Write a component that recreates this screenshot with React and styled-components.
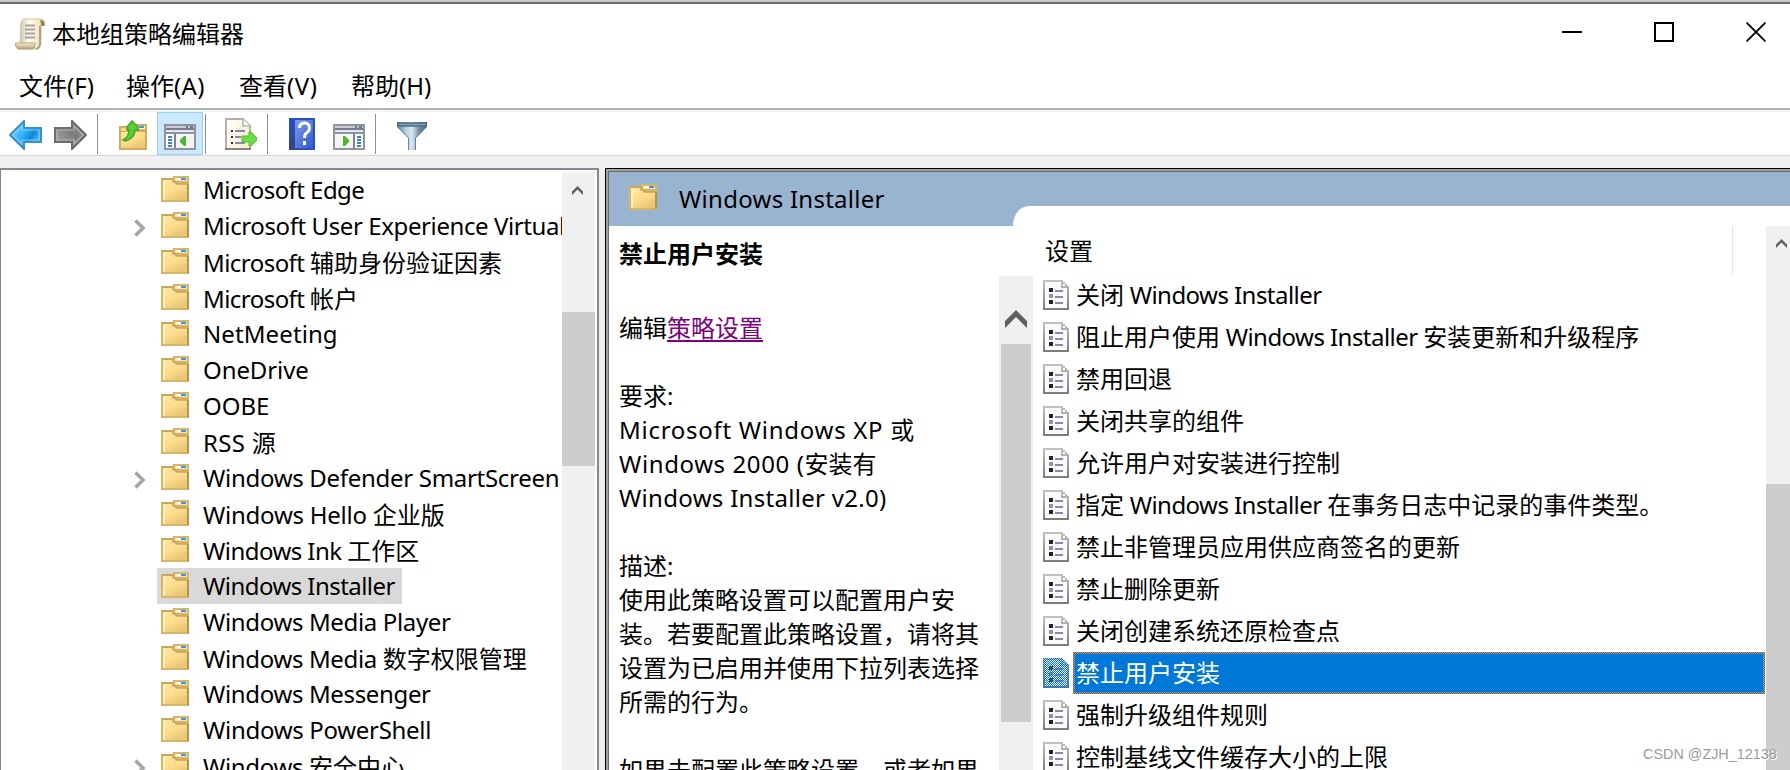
import React from 'react';
import styled, { createGlobalStyle, css } from 'styled-components';

const GlobalStyle = createGlobalStyle`
  * {
    box-sizing: border-box;
  }
  body {
    margin: 0;
    overflow: hidden;
    background: #f0f0f0;
    color: #000;
    font: 24px 'Noto Sans', 'Noto Sans CJK SC', sans-serif;
  }
  svg {
    display: block;
    flex: none;
  }
`;

// Window frame
const Window = styled.div`
  display: flex;
  flex-direction: column;
  width: 1790px;
  height: 770px;
  overflow: hidden;
  border-top: 2px solid #c8c8c8;
`;

// Title bar
const TitleBar = styled.header`
  display: flex;
  align-items: center;
  height: 62px;
  padding: 0 24px 0 14px;
  border-top: 2px solid #6b6b6b;
  background: #fff;
`;

const Title = styled.div`
  flex: 1;
  margin-left: 6px;
  line-height: 36px;
`;

const WindowButtons = styled.div`
  display: flex;
  gap: 72px;
  margin-top: -4px;
`;

// Menu row
const MenuBar = styled.nav`
  display: flex;
  gap: 33px;
  height: 44px;
  padding-left: 19px;
  background: #fff;
  line-height: 44px;
`;

const MenuItem = styled.div`
  width: ${(p) => p.$width}px;
  white-space: nowrap;
`;

// Toolbar
const ToolBar = styled.div`
  display: flex;
  height: 48px;
  border-top: 2px solid #b2b2b2;
  border-bottom: 1px solid #d9d9d9;
  background: #fff;
  box-shadow: inset 0 2px #f1f8fa;
`;

const ToolButton = styled.div`
  display: flex;
  align-items: flex-end;
  justify-content: center;
  width: ${(p) => p.$width || 46}px;
  height: 43px;
  margin: 2px 0 0 ${(p) => p.$left || 0}px;
  padding-bottom: 4px;
  border: 1px solid ${(p) => (p.$active ? '#99d1ff' : 'transparent')};
  background: ${(p) => (p.$active ? '#cce8ff' : 'transparent')};
`;

const Separator = styled.div`
  width: 1px;
  height: 40px;
  margin: 4px 0 0 ${(p) => p.$left}px;
  background: #8d8d8d;
`;

// Body with both panes
const Body = styled.main`
  display: flex;
  flex: 1;
  gap: 6px;
  min-height: 0;
  padding-top: 12px;
`;

const TreePane = styled.section`
  display: flex;
  justify-content: space-between;
  width: 599px;
  padding: 2px 2px 0 0;
  border: solid #828790;
  border-width: 2px 2px 0 1px;
  background: #fff;
`;

const TreeList = styled.div`
  width: 561px;
  overflow: hidden;
`;

const TreeRow = styled.div`
  display: flex;
  align-items: center;
  height: 36px;
  padding-left: 133px;
`;

const Expander = styled.div`
  flex: none;
  width: 23px;
  padding-top: 3px;
`;

const TreeLabel = styled.div`
  display: flex;
  flex: none;
  align-items: center;
  height: 36px;
  padding: 0 7px 2px 4px;
  background: ${(p) => (p.$selected ? '#d9d9d9' : 'transparent')};
  white-space: nowrap;

  svg {
    margin-right: 14px;
  }
`;

// Scrollbars
const ScrollTrack = styled.div`
  display: flex;
  flex: none;
  flex-direction: column;
  align-items: center;
  width: ${(p) => p.$width}px;
  background: #f0f0f0;
`;

const ScrollArrow = styled.div`
  display: flex;
  align-items: center;
  justify-content: center;
  height: ${(p) => p.$height}px;
  padding: ${(p) => p.$padding || 0};
`;

const ScrollThumb = styled.div`
  flex: none;
  width: ${(p) => p.$width}px;
  height: ${(p) => p.$height}px;
  margin-top: ${(p) => p.$top || 0}px;
  background: #cdcdcd;
`;

// Details pane
const DetailPane = styled.section`
  display: flex;
  flex: 1;
  flex-direction: column;
  border: solid #000;
  border-width: 1px 0 0 1px;
`;

const DetailInner = styled.div`
  display: flex;
  flex: 1;
  min-height: 0;
  border: solid #a0a0a0;
  border-width: 2px 0 0 2px;
`;

const DetailFrame = styled.div`
  display: grid;
  flex: 1;
  grid-template-columns: 424px 1fr;
  min-height: 0;
  border: solid #696969;
  border-width: 1px 0 0 1px;
  background: #fff;
`;

const Banner = styled.div`
  display: flex;
  grid-column: 1 / 3;
  height: 54px;
  background: #99b4d1;
`;

const BannerTitle = styled.div`
  display: flex;
  align-items: center;
  width: 404px;
  padding: 0 0 2px 20px;

  svg {
    margin: -2px 22px 0 0;
  }
`;

const BannerTab = styled.div`
  flex: 1;
  margin-top: 34px;
  border-top-left-radius: 16px 20px;
  background: #fff;
`;

const Description = styled.div`
  display: flex;
  justify-content: space-between;
  height: 544px;
  padding-left: 10px;
  overflow: hidden;
`;

const DescriptionText = styled.div`
  width: 378px;
  padding-top: 11px;
  line-height: 34px;
  white-space: nowrap;
`;

const PolicyName = styled.h2`
  height: 34px;
  margin: 0 0 40px;
  font-size: 24px;
  line-height: 34px;
`;

const Line = styled.p`
  height: 34px;
  margin: 0;
`;

const Edit = styled(Line)`
  margin-bottom: 34px;
`;

const EditLink = styled.a`
  color: #800080;
  text-decoration: underline 2px;
  text-underline-offset: 3px;
`;

const DescriptionScroll = styled(ScrollTrack)`
  margin-top: 50px;
`;

const Settings = styled.div`
  display: flex;
  height: 544px;
  overflow: hidden;
`;

const SettingsTable = styled.div`
  flex: 1;
  padding-right: 1px;
`;

const ColumnHeader = styled.div`
  width: 700px;
  height: 48px;
  padding-left: 12px;
  border-right: 1px solid #e5e5e5;
  line-height: 50px;
`;

const SettingRow = styled.div`
  display: flex;
  align-items: center;
  height: 42px;
  padding-left: 10px;
`;

const SettingLabel = styled.div`
  flex: 1;
  height: 42px;
  margin-left: 4px;
  padding-left: 1px;
  border: 2px solid transparent;
  line-height: 38px;
  white-space: nowrap;
  ${(p) =>
    p.$selected &&
    css`
      background:
        linear-gradient(#0078d7, #0078d7) padding-box,
        repeating-conic-gradient(#ff8728 0 25%, #0078d7 0 50%) 0 0 / 2px 2px border-box;
      color: #fff;
    `}
`;

const Latin = styled.span`
  letter-spacing: ${(p) => p.$spacing}px;
`;

const Watermark = styled.div`
  position: absolute;
  top: 744px;
  left: 1643px;
  color: #9b9b9b;
  font: 14.4px/20px 'Liberation Sans', sans-serif;
  text-shadow: 1px 1px #fff;
`;

// Latin runs are tracked separately, the Chinese glyphs stay on a 24px grid
const Mixed = ({ text, spacing = -0.55 }) =>
  text.split(/([ -~]+)/).map((part, i) =>
    i % 2 ? (
      <Latin key={i} $spacing={spacing}>
        {part}
      </Latin>
    ) : (
      part
    )
  );

// Icons
const FolderIcon = () => (
  <svg width="28" height="26" viewBox="0 0 28 26">
    <defs>
      <linearGradient id="folder" x1="0" y1="0" x2="0.6" y2="1">
        <stop offset="0" stopColor="#ffe9a2" />
        <stop offset="0.6" stopColor="#fbdb8b" />
        <stop offset="1" stopColor="#e9c676" />
      </linearGradient>
      <linearGradient id="folderEdge">
        <stop offset="0" stopColor="#cfa95a" />
        <stop offset="1" stopColor="#8f7539" />
      </linearGradient>
    </defs>
    <path d="M0 2h12V0h16v26H0z" fill="#d8b566" />
    <path d="M2 4h10l3 4h11v16H2z" fill="url(#folder)" />
    <path d="M1 3h11v3h3v2h12" fill="none" stroke="#c6a35a" strokeWidth="1.500" />
    <path d="M3 24V7h2" fill="none" stroke="#fff3bd" strokeWidth="1.500" />
    <path d="M14 2h12v3H14z" fill="#f6e3b4" />
    <path d="M16 2h5v2h-5z" fill="#fff" />
    <path d="M20 2h5v2h-5z" fill="#3f97e3" />
    <path d="M0 25h28" stroke="url(#folderEdge)" strokeWidth="2" />
    <path d="M27 8v17" stroke="#b5934b" strokeWidth="2" />
  </svg>
);

const ScrollIcon = () => (
  <svg width="32" height="32" viewBox="0 0 32 32">
    <defs>
      <linearGradient id="scroll">
        <stop offset="0" stopColor="#cfc5ac" />
        <stop offset="0.35" stopColor="#fffbe9" />
        <stop offset="0.75" stopColor="#f5e7bd" />
        <stop offset="1" stopColor="#d2c194" />
      </linearGradient>
      <linearGradient id="scrollFoot" x1="0" y1="0" x2="0" y2="1">
        <stop offset="0" stopColor="#fbf1cf" />
        <stop offset="1" stopColor="#ac9e79" />
      </linearGradient>
    </defs>
    <path d="M10 1h18q3 1 3 6h-4v19q-1 4-4 5H6V25L7 5q0-3 3-4z" fill="url(#scroll)" stroke="#cfc6ab" />
    <path d="M26 2q5 0 4.500 6H27V5z" fill="#94825a" />
    <path d="M26 8v17q0 5-4 6" fill="none" stroke="#aaa28c" strokeWidth="2" />
    <path d="M1.500 25H21v2q0 4-3 4H4q-3-1-2.500-6z" fill="url(#scrollFoot)" stroke="#b3a782" />
    <path d="M11 7.500h10M11 11.500h10M11 15.500h10M11 19.500h10" stroke="#a3a1b6" strokeWidth="2" />
  </svg>
);

const ArrowIcon = ({ forward }) => (
  <svg width="33" height="30" viewBox="0 0 33 30">
    <defs>
      <linearGradient id={forward ? 'fwd' : 'back'} x1="0" y1="0" x2="1" y2="0.600">
        <stop offset="0" stopColor={forward ? '#9a9a9a' : '#8fdcff'} />
        <stop offset="0.5" stopColor={forward ? '#7b7b7b' : '#35b2fa'} />
        <stop offset="0.75" stopColor={forward ? '#8b8b8b' : '#0b86dc'} />
        <stop offset="1" stopColor={forward ? '#a5a5a5' : '#4cb4f5'} />
      </linearGradient>
    </defs>
    <path
      d="M1 15 15 1v7h17v14H15v7z"
      transform={forward ? 'matrix(-1 0 0 1 33 0)' : undefined}
      fill={forward ? 'url(#fwd)' : 'url(#back)'}
      stroke={forward ? '#6e6e6e' : '#3f8fc6'}
      strokeWidth="2"
    />
    <path
      d="M4 15 13 6v4h17v10H13v4z"
      transform={forward ? 'matrix(-1 0 0 1 33 0)' : undefined}
      fill="none"
      stroke={forward ? '#b3b3b3' : '#80d2fc'}
      strokeWidth="1.200"
    />
  </svg>
);

const UpFolderIcon = () => (
  <svg width="28" height="30" viewBox="0 0 28 30">
    <path d="M0 6h8l3-2h17v26H0z" fill="#d3ae5f" />
    <path d="M2 12h24v16H2z" fill="url(#folder)" />
    <path d="M2 8h6v3H2z" fill="#f4d88e" />
    <path d="M18 6h8v3h-8z" fill="#fff" />
    <path d="M20 6h5v2h-5z" fill="#3f97e3" />
    <path d="M4 20q6-3 6-10H8V7l5-6 6 6v3h-3q0 8-10 11z" fill="#58cf36" stroke="#3fa827" strokeWidth="1.500" />
    <path d="M0 29h28" stroke="url(#folderEdge)" strokeWidth="2" />
  </svg>
);

const PaneIcon = ({ flip }) => (
  <svg width="32" height="26" viewBox="0 0 32 26">
    <path d="M1 1h30v24H1z" fill="#f4f4f4" stroke="#8f939b" strokeWidth="2" />
    <path d="M2 2h28v2H2z" fill="#c9ccd6" />
    <path d="M22 2h2v2h-2zM26 2h3v2h-3z" fill="#6e758c" />
    <path d="M2 4h28v2H2z" fill="#757b92" />
    <path d="M2 6h28v2H2z" fill="#e4e6eb" />
    <path d="M2 8h28v2H2z" fill="#8f939b" />
    <g transform={flip ? 'matrix(-1 0 0 1 32 0)' : undefined}>
      <path d="M2 10h8v14H2z" fill="#fff" />
      <path d="M11 10v14" stroke="#7d8496" strokeWidth="2" />
      <path d="M4 13h4M4 16h4M4 19h4M4 22h4" stroke="#3f7ec9" strokeWidth="1.800" />
      <path d="M22 12v10h-2l-4-4v-2l4-4z" fill="#4db82f" />
    </g>
  </svg>
);

const ExportIcon = () => (
  <svg width="32" height="32" viewBox="0 0 32 32">
    <defs>
      <linearGradient id="export" x1="0" y1="0" x2="1" y2="0.500">
        <stop offset="0" stopColor="#fff" />
        <stop offset="1" stopColor="#f8efd2" />
      </linearGradient>
    </defs>
    <path d="M1 1h17l7 7v23H1z" fill="url(#export)" stroke="#b0b0ac" strokeWidth="2" />
    <path d="M0 31h26" stroke="#85857f" strokeWidth="2" />
    <path d="M18 1v7h7" fill="#fff" stroke="#b5b5b5" strokeWidth="1.500" />
    <path d="M6 13h2M6 19h2M6 25h2" stroke="#2f2c38" strokeWidth="2" />
    <path d="M10 13h10M10 19h6M10 25h10" stroke="#8d88a6" strokeWidth="2" />
    <path d="M17 18h7v-4h2l6 6v2l-6 6h-2v-4h-7z" fill="#6bdc43" stroke="#55bd35" />
  </svg>
);

const HelpIcon = () => (
  <svg width="26" height="32" viewBox="0 0 26 32">
    <defs>
      <linearGradient id="help" x1="0" y1="0" x2="1" y2="1">
        <stop offset="0" stopColor="#7f9bea" />
        <stop offset="1" stopColor="#2f5bd0" />
      </linearGradient>
      <linearGradient id="spine" x1="0" y1="0" x2="0" y2="1">
        <stop offset="0" stopColor="#2450c4" />
        <stop offset="1" stopColor="#37437c" />
      </linearGradient>
    </defs>
    <path d="M0 0h26v32H0z" fill="#2a4fbe" />
    <path d="M0 0h6v32H0z" fill="url(#spine)" />
    <path d="M6 2h18v28H6z" fill="url(#help)" />
    <path d="M10.500 10q0-5 5-5t5 5q0 3-3 5-2 1-2 5" fill="none" stroke="#fff" strokeWidth="3" />
    <path d="M14 23h3v4h-3z" fill="#fff" />
  </svg>
);

const FilterIcon = () => (
  <svg width="30" height="28" viewBox="0 0 30 28">
    <defs>
      <linearGradient id="funnel">
        <stop offset="0" stopColor="#5d7f98" />
        <stop offset="0.3" stopColor="#b9d0de" />
        <stop offset="0.5" stopColor="#d9e8f1" />
        <stop offset="0.75" stopColor="#6b8ca5" />
        <stop offset="1" stopColor="#49687f" />
      </linearGradient>
    </defs>
    <path d="M0 0h30v5L19 16v12h-8V16L0 5z" fill="url(#funnel)" />
    <path d="M11.500 28V16L1 5M18.500 28V16L29 5" fill="none" stroke="#6d8798" />
    <path d="M1 1h28v3H1z" fill="#7fa3bd" stroke="#4d6c83" strokeWidth="1.500" />
  </svg>
);

const PolicyIcon = ({ selected }) => (
  <svg width="26" height="30" viewBox="0 0 26 30">
    <defs>
      <linearGradient id="page" x1="0" y1="0" x2="0" y2="1">
        <stop offset="0" stopColor="#c2c2c2" />
        <stop offset="1" stopColor="#7b7b7b" />
      </linearGradient>
      <pattern id="dither" width="2" height="2" patternUnits="userSpaceOnUse">
        <path d="M0 0h1v1H0zM1 1h1v1H1z" fill="#0078d7" />
      </pattern>
    </defs>
    <path d="M0 0h20v2h2v2h2v2h2v24H0z" fill="url(#page)" />
    <path d="M2 2h16v6h6v20H2z" fill="#fafafa" />
    <path d="M20 4h2v2h-2z" fill="#fff" />
    <path d="M6 8h4v4H6zM6 20h4v4H6z" fill="#222029" />
    <path d="M6 14h4v4H6z" fill="#9690aa" />
    <path d="M12 11h8M12 17h8M12 23h8" stroke="#8d88a6" strokeWidth="2" />
    {selected && <path d="M0 0h20v2h2v2h2v2h2v24H0z" fill="url(#dither)" />}
  </svg>
);

const Chevron = () => (
  <svg width="12" height="18" viewBox="0 0 12 18">
    <path d="M1.500 1.500 9 9l-7.500 7.500" fill="none" stroke="#a6a6a6" strokeWidth="3.600" />
  </svg>
);

const UpIcon = ({ width }) => (
  <svg width={width} height={(width * 9) / 11} viewBox="0 0 11 9">
    <path d="M0 5.500 5.500 0 11 5.500V9L5.500 3.500 0 9z" fill="#606060" />
  </svg>
);

const tree = [
  { name: 'Microsoft Edge' },
  { name: 'Microsoft User Experience Virtual', spacing: -0.4, expandable: true },
  { name: 'Microsoft 辅助身份验证因素' },
  { name: 'Microsoft 帐户' },
  { name: 'NetMeeting', spacing: 0.1 },
  { name: 'OneDrive', spacing: -0.1 },
  { name: 'OOBE', spacing: 0 },
  { name: 'RSS 源', spacing: 0.3 },
  { name: 'Windows Defender SmartScreen', spacing: -0.3, expandable: true },
  { name: 'Windows Hello 企业版', spacing: -0.25 },
  { name: 'Windows Ink 工作区' },
  { name: 'Windows Installer' , selected: true },
  { name: 'Windows Media Player', spacing: -0.35 },
  { name: 'Windows Media 数字权限管理', spacing: -0.35 },
  { name: 'Windows Messenger', spacing: -0.35 },
  { name: 'Windows PowerShell', spacing: -0.3 },
  { name: 'Windows 安全中心', spacing: -0.35, expandable: true },
];

const description = [
  { text: '要求:' },
  { text: 'Microsoft Windows XP 或', spacing: 0.72 },
  { text: 'Windows 2000 (安装有', spacing: 0.6 },
  { text: 'Windows Installer v2.0)', spacing: 0.3 },
  { text: '' },
  { text: '描述:' },
  { text: '使用此策略设置可以配置用户安' },
  { text: '装。若要配置此策略设置，请将其' },
  { text: '设置为已启用并使用下拉列表选择' },
  { text: '所需的行为。' },
  { text: '' },
  { text: '如果未配置此策略设置，或者如果' },
];

const settings = [
  '关闭 Windows Installer',
  '阻止用户使用 Windows Installer 安装更新和升级程序',
  '禁用回退',
  '关闭共享的组件',
  '允许用户对安装进行控制',
  '指定 Windows Installer 在事务日志中记录的事件类型。',
  '禁止非管理员应用供应商签名的更新',
  '禁止删除更新',
  '关闭创建系统还原检查点',
  '禁止用户安装',
  '强制升级组件规则',
  '控制基线文件缓存大小的上限',
];

const App = () => (
  <Window>
    <GlobalStyle />
    <TitleBar>
      <ScrollIcon />
      <Title>本地组策略编辑器</Title>
      <WindowButtons>
        <svg width="20" height="20">
          <path d="M0 10h20" stroke="#000" strokeWidth="2" />
        </svg>
        <svg width="20" height="20">
          <path d="M1 1h18v18H1z" fill="none" stroke="#000" strokeWidth="2" />
        </svg>
        <svg width="20" height="20">
          <path d="M.5.5l19 19M19.500.5l-19 19" stroke="#000" strokeWidth="1.800" />
        </svg>
      </WindowButtons>
    </TitleBar>
    <MenuBar>
      <MenuItem $width={74}>
        <Mixed text="文件(F)" spacing={0.1} />
      </MenuItem>
      <MenuItem $width={80}>
        <Mixed text="操作(A)" spacing={0.4} />
      </MenuItem>
      <MenuItem $width={79}>
        <Mixed text="查看(V)" spacing={0.6} />
      </MenuItem>
      <MenuItem $width={80}>
        <Mixed text="帮助(H)" spacing={0} />
      </MenuItem>
    </MenuBar>
    <ToolBar>
      <ToolButton $left={2}>
        <ArrowIcon />
      </ToolButton>
      <ToolButton $width={45}>
        <ArrowIcon forward />
      </ToolButton>
      <Separator $left={4} />
      <ToolButton $left={12}>
        <UpFolderIcon />
      </ToolButton>
      <ToolButton $left={1} $active>
        <PaneIcon />
      </ToolButton>
      <Separator $left={2} />
      <ToolButton $left={12}>
        <ExportIcon />
      </ToolButton>
      <Separator $left={3} />
      <ToolButton $left={11}>
        <HelpIcon />
      </ToolButton>
      <ToolButton $left={1}>
        <PaneIcon flip />
      </ToolButton>
      <Separator $left={3} />
      <ToolButton $left={13}>
        <FilterIcon />
      </ToolButton>
    </ToolBar>
    <Body>
      <TreePane>
        <TreeList>
          {tree.map((item) => (
            <TreeRow key={item.name}>
              <Expander>{item.expandable && <Chevron />}</Expander>
              <TreeLabel $selected={item.selected}>
                <FolderIcon />
                <span>
                  <Mixed text={item.name} spacing={item.spacing} />
                </span>
              </TreeLabel>
            </TreeRow>
          ))}
        </TreeList>
        <ScrollTrack $width={33}>
          <ScrollArrow $height={36} $padding="0 2px 0 0">
            <UpIcon width={11} />
          </ScrollArrow>
          <ScrollThumb $width={33} $height={154} $top={104} />
        </ScrollTrack>
      </TreePane>
      <DetailPane>
        <DetailInner>
          <DetailFrame>
            <Banner>
              <BannerTitle>
                <FolderIcon />
                <span>
                  <Mixed text="Windows Installer" spacing={0.27} />
                </span>
              </BannerTitle>
              <BannerTab />
            </Banner>
            <Description>
              <DescriptionText>
                <PolicyName>禁止用户安装</PolicyName>
                <Edit>
                  编辑<EditLink>策略设置</EditLink>
                </Edit>
                {description.map((line, i) => (
                  <Line key={i}>
                    <Mixed text={line.text} spacing={line.spacing} />
                  </Line>
                ))}
              </DescriptionText>
              <DescriptionScroll $width={34}>
                <ScrollArrow $height={68} $padding="18px 0 0">
                  <UpIcon width={22} />
                </ScrollArrow>
                <ScrollThumb $width={30} $height={378} />
              </DescriptionScroll>
            </Description>
            <Settings>
              <SettingsTable>
                <ColumnHeader>设置</ColumnHeader>
                {settings.map((name) => (
                  <SettingRow key={name}>
                    <PolicyIcon selected={name === '禁止用户安装'} />
                    <SettingLabel $selected={name === '禁止用户安装'}>
                      <Mixed text={name} />
                    </SettingLabel>
                  </SettingRow>
                ))}
              </SettingsTable>
              <ScrollTrack $width={24}>
                <ScrollArrow $height={34} $padding="0 0 0 7px">
                  <UpIcon width={11} />
                </ScrollArrow>
                <ScrollThumb $width={24} $height={286} $top={224} />
              </ScrollTrack>
            </Settings>
          </DetailFrame>
        </DetailInner>
      </DetailPane>
    </Body>
    <Watermark>CSDN @ZJH_12138</Watermark>
  </Window>
);

export default App;
